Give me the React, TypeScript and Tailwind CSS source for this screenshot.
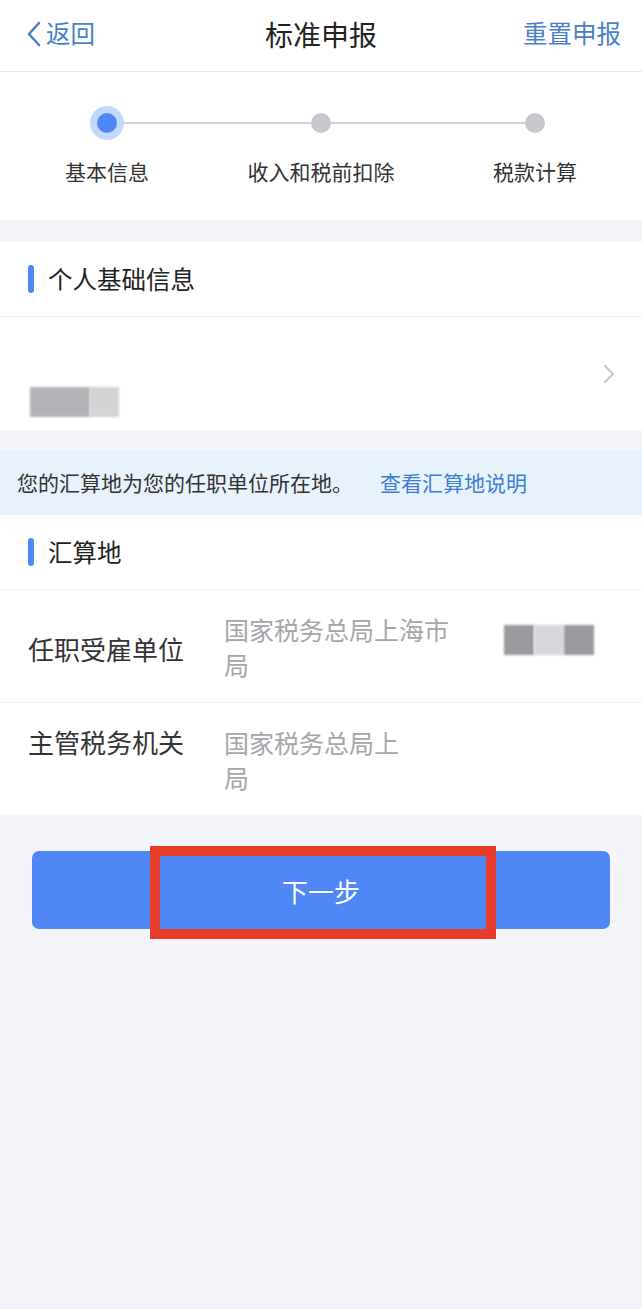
const font = { fontFamily: '"Noto Sans CJK SC", "Noto Sans", sans-serif' };

const steps = ['基本信息', '收入和税前扣除', '税款计算'];

const SectionTitle = ({ title }: { title: string }) => (
  <div className="flex h-[74px] items-center gap-[14px] px-[28px]">
    <span className="h-[28px] w-[6px] rounded-full bg-[#4f87f6]" />
    <span className="text-[24.5px] leading-none text-[#222]">{title}</span>
  </div>
);

export default function App() {
  return (
    <div className="min-h-[1309px] w-[642px] bg-[#f3f5f9]" style={font}>
      {/* header */}
      <header className="relative flex h-[72px] items-center justify-between border-b border-[#e8e9ec] bg-white pb-[4px] pl-[24px] pr-[21px]">
        <button className="flex items-center gap-[2px] text-[24.5px] text-[#4a80c8]">
          <svg width="20" height="28" viewBox="0 0 20 28" fill="none">
            <path d="M15 3 L5 14 L15 25" stroke="#4a80c8" strokeWidth="2.6" strokeLinecap="round" strokeLinejoin="round" />
          </svg>
          <span>返回</span>
        </button>
        <h1 className="absolute left-1/2 top-[16px] -translate-x-1/2 text-[28px] leading-[36px] text-[#222]">标准申报</h1>
        <button className="text-[24.5px] text-[#4a80c8]">重置申报</button>
      </header>

      {/* stepper */}
      <section className="bg-white pb-[38px] pt-[33px]">
        <div className="relative grid h-[36px] grid-cols-3 items-center">
          <div className="absolute left-[107px] right-[107px] top-1/2 h-[2px] -translate-y-1/2 bg-[#d3d5da]" />
          <div className="relative flex justify-center">
            <span className="flex h-[34px] w-[34px] items-center justify-center rounded-full bg-[#c3d8fb]">
              <span className="h-[20px] w-[20px] rounded-full bg-[#4f87f6]" />
            </span>
          </div>
          <div className="relative flex justify-center">
            <span className="h-[20px] w-[20px] rounded-full bg-[#c6c8ce]" />
          </div>
          <div className="relative flex justify-center">
            <span className="h-[20px] w-[20px] rounded-full bg-[#c6c8ce]" />
          </div>
        </div>
        <div className="mt-[20px] grid grid-cols-3 text-center text-[21px] leading-none text-[#333]">
          {steps.map((s) => (
            <span key={s}>{s}</span>
          ))}
        </div>
      </section>

      {/* personal info */}
      <section className="mt-[22px] bg-white">
        <SectionTitle title="个人基础信息" />
        <div className="flex h-[114px] items-center justify-between border-t border-[#eef0f3] pl-[30px] pr-[26px]">
          <div className="mt-[56px] flex h-[30px]">
            <span className="w-[60px] bg-[#b4b4b8] blur-[1px]" />
            <span className="w-[29px] bg-[#d4d4d6] blur-[1px]" />
          </div>
          <svg width="14" height="24" viewBox="0 0 14 24" fill="none">
            <path d="M3 4 L11 12 L3 20" stroke="#c4c6ca" strokeWidth="2" strokeLinecap="round" strokeLinejoin="round" />
          </svg>
        </div>
      </section>

      {/* notice */}
      <div className="mt-[20px] flex h-[65px] items-center bg-[#e8f2fd] px-[17px] text-[21px] text-[#333]">
        您的汇算地为您的任职单位所在地。
        <span className="ml-[27px] text-[#3f7fd0]">查看汇算地说明</span>
      </div>

      {/* location */}
      <section className="bg-white">
        <SectionTitle title="汇算地" />
        <div className="border-t border-[#eef0f3]">
          <div className="flex h-[113px] items-start gap-[40px] border-b border-[#eef0f3] pl-[28px] pt-[22px]">
            <span className="mt-[24px] w-[156px] shrink-0 text-[26px] leading-none text-[#333]">任职受雇单位</span>
            <div className="flex flex-1 items-start">
              <div className="text-[25px] leading-[35px] text-[#a6a6aa]">
                <div>国家税务总局上海市</div>
                <div>局</div>
              </div>
              <div className="ml-[55px] mt-[13px] flex h-[30px]">
                <span className="w-[30px] bg-[#9a9a9e] blur-[1px]" />
                <span className="w-[30px] bg-[#d8d8dc] blur-[1px]" />
                <span className="w-[30px] bg-[#9a9a9e] blur-[1px]" />
              </div>
            </div>
          </div>
          <div className="flex h-[112px] items-start gap-[40px] pl-[28px] pt-[22px]">
            <span className="mt-[4px] w-[156px] shrink-0 text-[26px] leading-none text-[#333]">主管税务机关</span>
            <div className="text-[25px] leading-[35px] text-[#a6a6aa]">
              <div>国家税务总局上</div>
              <div>局</div>
            </div>
          </div>
        </div>
      </section>

      {/* next button */}
      <div className="relative px-[32px] pt-[36px]">
        <button className="flex h-[78px] w-full items-center justify-center rounded-[7px] bg-[#4f87f6] text-[26px] text-white">
          下一步
        </button>
        <div className="pointer-events-none absolute left-[150px] top-[31px] h-[93px] w-[346px] border-[10px] border-[#e73c2a]" />
      </div>
    </div>
  );
}
